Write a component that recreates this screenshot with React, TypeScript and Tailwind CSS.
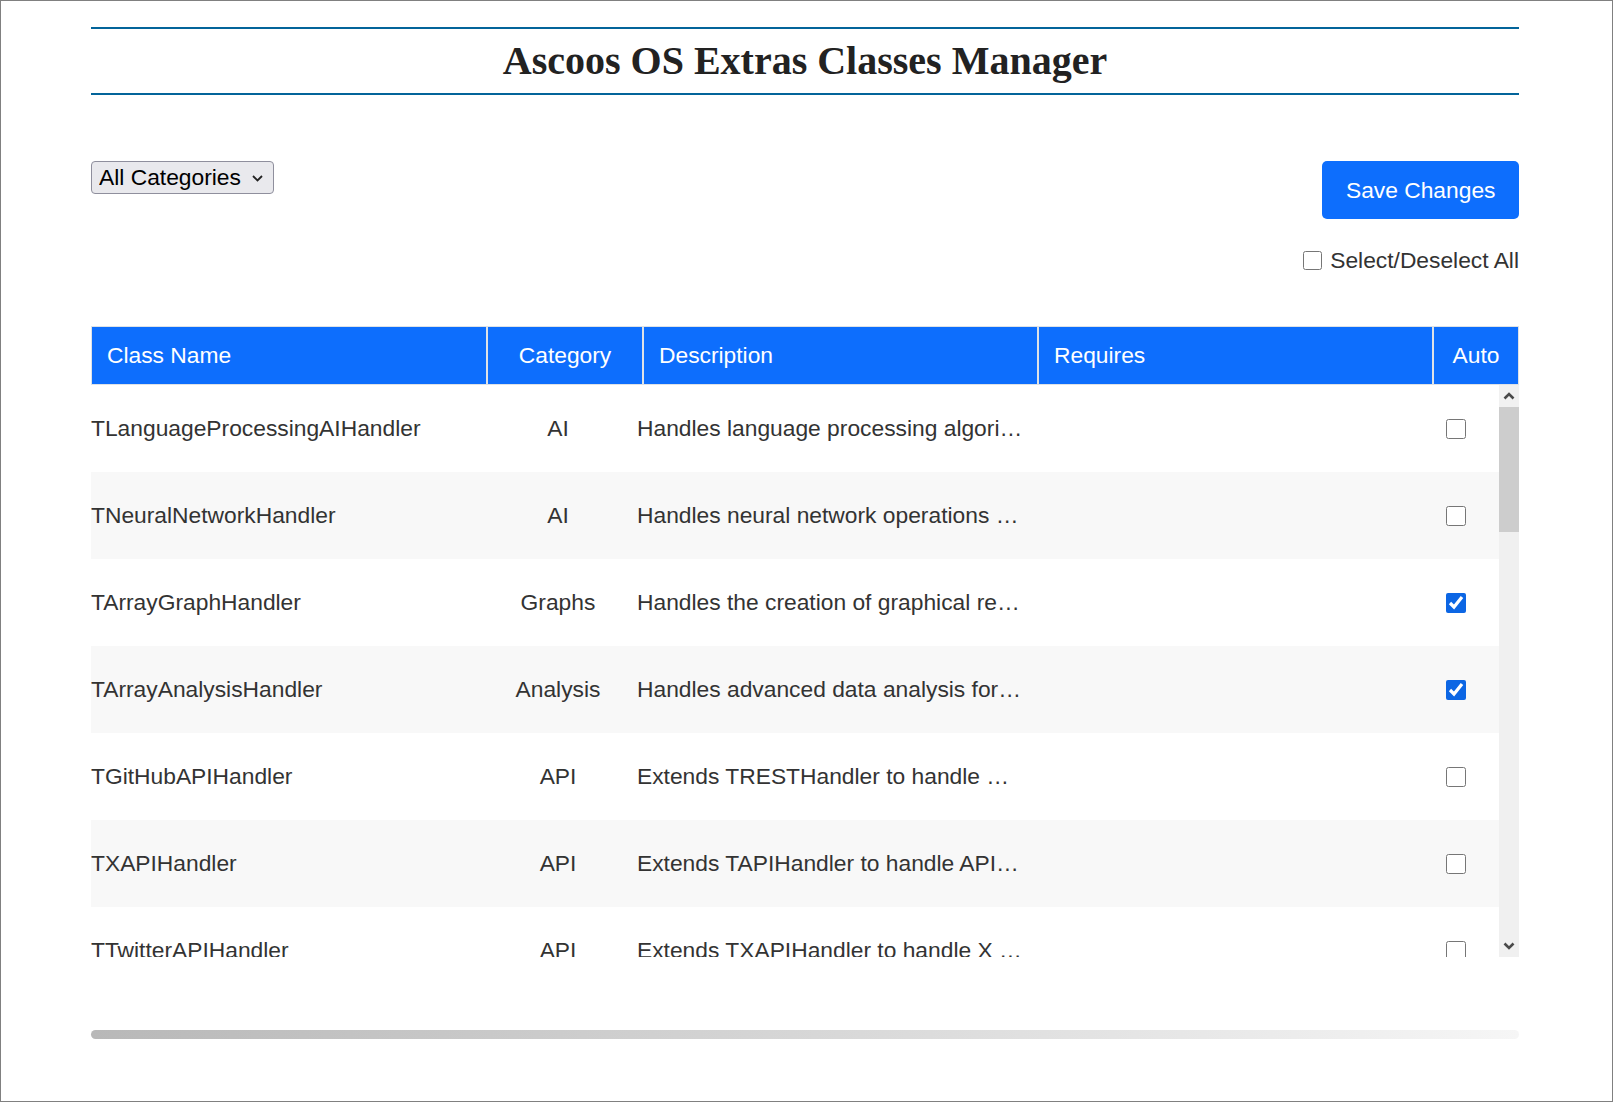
import React, { useState } from 'react';

type ClassRow = {
  name: string;
  category: string;
  description: string;
  requires: string;
  auto: boolean;
};

const rows: ClassRow[] = [
  { name: 'TLanguageProcessingAIHandler', category: 'AI', description: 'Handles language processing algorithms and natural language tasks.', requires: '', auto: false },
  { name: 'TNeuralNetworkHandler', category: 'AI', description: 'Handles neural network operations and model training.', requires: '', auto: false },
  { name: 'TArrayGraphHandler', category: 'Graphs', description: 'Handles the creation of graphical representations from arrays.', requires: '', auto: true },
  { name: 'TArrayAnalysisHandler', category: 'Analysis', description: 'Handles advanced data analysis for arrays and datasets.', requires: '', auto: true },
  { name: 'TGitHubAPIHandler', category: 'API', description: 'Extends TRESTHandler to handle GitHub API requests.', requires: '', auto: false },
  { name: 'TXAPIHandler', category: 'API', description: 'Extends TAPIHandler to handle API requests for X.', requires: '', auto: false },
  { name: 'TTwitterAPIHandler', category: 'API', description: 'Extends TXAPIHandler to handle X (Twitter) API calls.', requires: '', auto: false },
  { name: 'TRESTHandler', category: 'API', description: 'Handles RESTful requests and responses.', requires: '', auto: false },
  { name: 'TAPIHandler', category: 'API', description: 'Base class for handling remote API communication.', requires: '', auto: false },
  { name: 'TCacheHandler', category: 'Cache', description: 'Handles caching of data in files, memory and databases.', requires: '', auto: false },
  { name: 'TCacheFileHandler', category: 'Cache', description: 'Handles file based cache storage and expiration.', requires: '', auto: false },
  { name: 'TCacheAPCuHandler', category: 'Cache', description: 'Handles APCu cache storage operations.', requires: '', auto: false },
  { name: 'TCacheMemcachedHandler', category: 'Cache', description: 'Handles Memcached cache storage operations.', requires: '', auto: false },
  { name: 'TCacheRedisHandler', category: 'Cache', description: 'Handles Redis cache storage operations.', requires: '', auto: false },
  { name: 'TCsvHandler', category: 'Files', description: 'Handles reading and writing of CSV files.', requires: '', auto: false },
  { name: 'TJsonHandler', category: 'Files', description: 'Handles JSON encoding, decoding and validation.', requires: '', auto: false },
  { name: 'TXmlHandler', category: 'Files', description: 'Handles XML parsing and generation.', requires: '', auto: false },
  { name: 'TImageHandler', category: 'Media', description: 'Handles image manipulation and conversion.', requires: '', auto: false },
  { name: 'TAudioHandler', category: 'Media', description: 'Handles audio file processing and metadata.', requires: '', auto: false },
  { name: 'TVideoHandler', category: 'Media', description: 'Handles video file processing and metadata.', requires: '', auto: false },
  { name: 'TDateTimeHandler', category: 'Utils', description: 'Handles date and time calculations and formats.', requires: '', auto: false },
  { name: 'TStringHandler', category: 'Utils', description: 'Handles string manipulation and transliteration.', requires: '', auto: false },
  { name: 'TMathHandler', category: 'Math', description: 'Handles mathematical operations and statistics.', requires: '', auto: false },
  { name: 'TStatisticsHandler', category: 'Math', description: 'Handles statistical calculations on datasets.', requires: '', auto: false },
  { name: 'TSecurityHandler', category: 'Security', description: 'Handles encryption, hashing and token generation.', requires: '', auto: false },
  { name: 'TNetworkHandler', category: 'Network', description: 'Handles network connections and socket operations.', requires: '', auto: false },
  { name: 'TWeatherHandler', category: 'API', description: 'Handles weather data retrieval from remote services.', requires: '', auto: false },
  { name: 'TMailHandler', category: 'Network', description: 'Handles sending and receiving of e-mail messages.', requires: '', auto: false },
];

const headCell = 'h-full flex items-center border border-[#dee2e6] px-[15px]';

const Chevron = ({ up }: { up?: boolean }) => (
  <svg width="12" height="8" viewBox="0 0 12 8" className="text-[#4a4a4a]">
    <polyline
      points={up ? '1.5,6.5 6,2 10.5,6.5' : '1.5,1.5 6,6 10.5,1.5'}
      fill="none"
      stroke="currentColor"
      strokeWidth="2.6"
    />
  </svg>
);

export default function App() {
  const [items, setItems] = useState(rows);

  const toggle = (i: number) =>
    setItems((prev) => prev.map((r, j) => (j === i ? { ...r, auto: !r.auto } : r)));

  return (
    <div className="h-[1102px] w-full border border-[#808080] bg-white font-['Liberation_Sans',Arial,sans-serif] text-[#333]">
      <div className="ml-[90px] w-[1428px] pt-[26px]">
        {/* Title */}
        <h1 className="flex h-[68px] items-center justify-center border-y-2 border-[#03649a] font-['Liberation_Serif','Times_New_Roman',serif] text-[40px] font-bold text-[#222]">
          Ascoos OS Extras Classes Manager
        </h1>

        {/* Controls */}
        <div className="mt-[66px] flex items-start justify-between">
          <div className="relative">
            <select className="h-[33px] w-[183px] appearance-none rounded-[4px] border border-[#8f8f9d] bg-[#e9e9ed] pl-[7px] pr-[30px] text-[22.8px] leading-[27px] text-black">
              <option>All Categories</option>
              <option>AI</option>
              <option>API</option>
              <option>Analysis</option>
              <option>Graphs</option>
            </select>
            <svg
              width="11"
              height="7"
              viewBox="0 0 11 7"
              className="pointer-events-none absolute right-[11px] top-[14px] text-[#222]"
            >
              <polyline points="1,1 5.5,5.5 10,1" fill="none" stroke="currentColor" strokeWidth="1.8" />
            </svg>
          </div>

          <div className="flex flex-col items-end">
            <button className="h-[58px] rounded-[5px] bg-[#0d6efd] px-[23.5px] text-[22.8px] text-white">
              Save Changes
            </button>
            <label className="mt-[28px] flex items-center gap-[8px] text-[22.8px] leading-[27px] text-[#333]">
              <input type="checkbox" className="h-[19px] w-[19px] accent-[#0c66e4]" />
              Select/Deselect All
            </label>
          </div>
        </div>

        {/* Table */}
        <div className="mt-[52px]">
          <div className="grid h-[59px] grid-cols-[396px_156px_395px_395px_86px] bg-[#0d6efd] text-[22.8px] text-white">
            <div className={headCell}>Class Name</div>
            <div className={`${headCell} justify-center`}>Category</div>
            <div className={headCell}>Description</div>
            <div className={headCell}>Requires</div>
            <div className={`${headCell} justify-center`}>Auto</div>
          </div>

          <div className="flex h-[572px]">
            <div className="flex-1 overflow-hidden">
              {items.map((r, i) => (
                <div
                  key={r.name}
                  className={`grid h-[87px] grid-cols-[402px_130px_416px_1fr_80px] items-center pr-[3px] text-[22.8px] ${
                    i % 2 === 1 ? 'bg-[#f8f8f8]' : 'bg-white'
                  }`}
                >
                  <div className="truncate">{r.name}</div>
                  <div className="text-center">{r.category}</div>
                  <div className="truncate px-[14px]">{r.description}</div>
                  <div className="truncate px-[14px]">{r.requires}</div>
                  <div className="flex justify-center">
                    <input
                      type="checkbox"
                      checked={r.auto}
                      onChange={() => toggle(i)}
                      className="h-[20px] w-[20px] accent-[#0c66e4]"
                    />
                  </div>
                </div>
              ))}
            </div>

            {/* Scrollbar */}
            <div className="flex w-[20px] flex-col bg-[#f0f0f0]">
              <div className="flex h-[22px] items-center justify-center bg-[#f1f1f1]">
                <Chevron up />
              </div>
              <div className="h-[125px] bg-[#cdcdcd]" />
              <div className="flex-1" />
              <div className="flex h-[22px] items-center justify-center">
                <Chevron />
              </div>
            </div>
          </div>
        </div>

        {/* Divider */}
        <div className="mt-[73px] h-[9px] rounded-full bg-linear-to-r from-[#b8b8b8] to-[#f6f6f6]" />
      </div>
    </div>
  );
}
